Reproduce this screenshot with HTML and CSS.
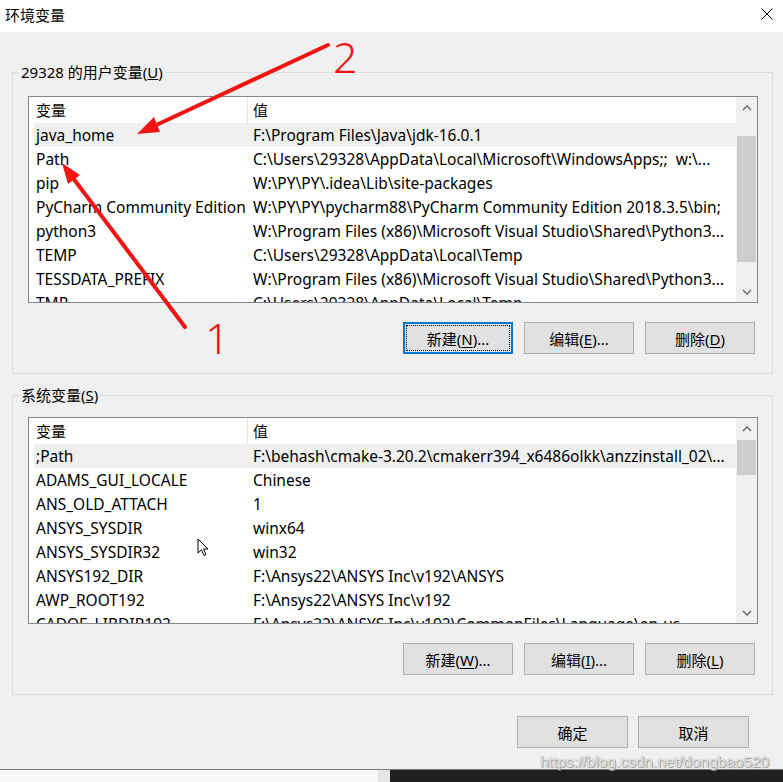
FILE: index.html
```html
<!DOCTYPE html>
<html lang="zh-CN">
<head>
    <meta charset="UTF-8">
    <title>环境变量</title>
    <link rel="stylesheet" href="styles.css">
</head>
<body>
    <div class="window">
        <div class="titlebar">
            <span class="title">环境变量</span>
            <svg class="close-icon" width="12" height="12" viewBox="0 0 12 12">
                <path d="M0.5 0.5 L11.5 11.5 M11.5 0.5 L0.5 11.5" stroke="#000" stroke-width="1" fill="none"/>
            </svg>
        </div>

        <div class="dialog-body">
            <!-- 用户变量 -->
            <div class="group">
                <div class="group-label">29328 的用户变量(<u>U</u>)</div>
                <div class="list">
                    <div class="list-view">
                        <div class="list-header">
                            <div class="col-name">变量</div>
                            <div class="col-value">值</div>
                        </div>
                        <div class="row selected"><div class="col-name">java_home</div><div class="col-value">F:\Program Files\Java\jdk-16.0.1</div></div>
                        <div class="row"><div class="col-name">Path</div><div class="col-value">C:\Users\29328\AppData\Local\Microsoft\WindowsApps;;&nbsp; w:\...</div></div>
                        <div class="row"><div class="col-name">pip</div><div class="col-value">W:\PY\PY\.idea\Lib\site-packages</div></div>
                        <div class="row"><div class="col-name">PyCharm Community Edition</div><div class="col-value">W:\PY\PY\pycharm88\PyCharm Community Edition 2018.3.5\bin;</div></div>
                        <div class="row"><div class="col-name">python3</div><div class="col-value">W:\Program Files (x86)\Microsoft Visual Studio\Shared\Python3...</div></div>
                        <div class="row"><div class="col-name">TEMP</div><div class="col-value">C:\Users\29328\AppData\Local\Temp</div></div>
                        <div class="row"><div class="col-name">TESSDATA_PREFIX</div><div class="col-value">W:\Program Files (x86)\Microsoft Visual Studio\Shared\Python3...</div></div>
                        <div class="row"><div class="col-name">TMP</div><div class="col-value">C:\Users\29328\AppData\Local\Temp</div></div>
                    </div>
                    <div class="scrollbar">
                        <div class="scroll-btn">
                            <svg width="10" height="6" viewBox="0 0 10 6"><path d="M1 5 L5 1 L9 5" stroke="#606060" stroke-width="1.3" fill="none"/></svg>
                        </div>
                        <div class="scroll-track">
                            <div class="thumb thumb-user"></div>
                        </div>
                        <div class="scroll-btn">
                            <svg width="10" height="6" viewBox="0 0 10 6"><path d="M1 1 L5 5 L9 1" stroke="#606060" stroke-width="1.3" fill="none"/></svg>
                        </div>
                    </div>
                </div>
                <div class="button-row">
                    <button class="btn focused">新建(<u>N</u>)...</button>
                    <button class="btn">编辑(<u>E</u>)...</button>
                    <button class="btn">删除(<u>D</u>)</button>
                </div>
            </div>

            <!-- 系统变量 -->
            <div class="group group-system">
                <div class="group-label">系统变量(<u>S</u>)</div>
                <div class="list">
                    <div class="list-view">
                        <div class="list-header">
                            <div class="col-name">变量</div>
                            <div class="col-value">值</div>
                        </div>
                        <div class="row selected"><div class="col-name">;Path</div><div class="col-value">F:\behash\cmake-3.20.2\cmakerr394_x6486olkk\anzzinstall_02\...</div></div>
                        <div class="row"><div class="col-name">ADAMS_GUI_LOCALE</div><div class="col-value">Chinese</div></div>
                        <div class="row"><div class="col-name">ANS_OLD_ATTACH</div><div class="col-value">1</div></div>
                        <div class="row"><div class="col-name">ANSYS_SYSDIR</div><div class="col-value">winx64</div></div>
                        <div class="row"><div class="col-name">ANSYS_SYSDIR32</div><div class="col-value">win32</div></div>
                        <div class="row"><div class="col-name">ANSYS192_DIR</div><div class="col-value">F:\Ansys22\ANSYS Inc\v192\ANSYS</div></div>
                        <div class="row"><div class="col-name">AWP_ROOT192</div><div class="col-value">F:\Ansys22\ANSYS Inc\v192</div></div>
                        <div class="row"><div class="col-name">CADOE_LIBDIR192</div><div class="col-value">F:\Ansys22\ANSYS Inc\v192\CommonFiles\Language\en-us</div></div>
                    </div>
                    <div class="scrollbar">
                        <div class="scroll-btn">
                            <svg width="10" height="6" viewBox="0 0 10 6"><path d="M1 5 L5 1 L9 5" stroke="#606060" stroke-width="1.3" fill="none"/></svg>
                        </div>
                        <div class="scroll-track">
                            <div class="thumb thumb-system"></div>
                        </div>
                        <div class="scroll-btn">
                            <svg width="10" height="6" viewBox="0 0 10 6"><path d="M1 1 L5 5 L9 1" stroke="#606060" stroke-width="1.3" fill="none"/></svg>
                        </div>
                    </div>
                </div>
                <div class="button-row">
                    <button class="btn">新建(<u>W</u>)...</button>
                    <button class="btn">编辑(<u>I</u>)...</button>
                    <button class="btn">删除(<u>L</u>)</button>
                </div>
            </div>

            <div class="dialog-buttons">
                <button class="btn btn-wide">确定</button>
                <button class="btn btn-wide">取消</button>
            </div>
        </div>

        <div class="desktop">
            <div class="desktop-light"></div>
            <div class="desktop-edge"></div>
            <div class="desktop-dark"></div>
        </div>
    </div>

    <!-- 红色标注箭头 -->
    <svg class="annotations" width="783" height="782" viewBox="0 0 783 782">
        <g stroke="#f01414" stroke-width="4" stroke-linecap="round" fill="#f01414">
            <line x1="328" y1="45" x2="152" y2="127"/>
            <line x1="185" y1="327" x2="70" y2="174"/>
        </g>
        <g fill="#f01414">
            <polygon points="137,134 160,132 154,117"/>
            <polygon points="62,163 80,175 68,184"/>
        </g>
        <text class="mark" x="333" y="73">2</text>
        <text class="mark" x="205" y="354">1</text>
    </svg>

    <svg class="cursor" width="14" height="20" viewBox="0 0 14 20">
        <path d="M1 1 L1 15 L4.5 11.8 L7 17.5 L9 16.6 L6.6 11 L11 11 Z" fill="#fff" stroke="#000" stroke-width="1"/>
    </svg>

    <div class="watermark">https://blog.csdn.net/dongbao520</div>
</body>
</html>
```

FILE: styles.css
```css
:root {
    --dialog-bg: #f0f0f0;
    --group-border: #dcdcdc;
    --list-border: #828790;
    --button-bg: #e1e1e1;
    --button-border: #adadad;
    --focus-blue: #0078d7;
}

* {
    margin: 0;
    padding: 0;
    box-sizing: border-box;
}

body {
    width: 783px;
    height: 782px;
    overflow: hidden;
    position: relative;
    font-family: "Noto Sans", "Noto Sans CJK SC", sans-serif;
    font-size: 15px;
    color: #000;
    background: #fff;
}

.window {
    display: flex;
    flex-direction: column;
    height: 782px;
}

.titlebar {
    height: 32px;
    background: #fff;
    display: flex;
    align-items: center;
    justify-content: space-between;
    padding: 0 10px 4px 5px;
}

.title {
    font-size: 15px;
}

.dialog-body {
    background: var(--dialog-bg);
    height: 738px;
    padding: 40px 10px 0 12px;
    border-bottom: 1px solid #7a7a7a;
}

.group {
    border: 1px solid var(--group-border);
    padding: 0 14px 19px 15px;
}

.group-system {
    margin-top: 21px;
}

.group-label {
    width: fit-content;
    margin: -11px 0 14px -9px;
    padding: 0 2px;
    line-height: 20px;
    background: var(--dialog-bg);
}

.group-system .group-label {
    margin-bottom: 12px;
}

.list {
    height: 207px;
    border: 1px solid var(--list-border);
    background: #fff;
    display: flex;
}

.list-view {
    flex: 1;
    overflow: hidden;
    padding-left: 5px;
}

.list-header,
.row {
    display: grid;
    grid-template-columns: 213px 1fr;
    white-space: nowrap;
}

.list-header {
    height: 26px;
    line-height: 26px;
}

.list-header .col-value {
    border-left: 1px solid #e5e5e5;
    padding-left: 5px;
}

.row {
    height: 24px;
    line-height: 24px;
    font-size: 15.5px;
}

.row.selected {
    background: #f0f0f0;
}

.col-name {
    padding-left: 2px;
    overflow: hidden;
}

.col-value {
    padding-left: 6px;
    overflow: hidden;
}

.scrollbar {
    width: 21px;
    background: var(--dialog-bg);
    display: flex;
    flex-direction: column;
}

.scroll-btn {
    height: 21px;
    display: flex;
    align-items: center;
    justify-content: center;
}

.scroll-track {
    flex: 1;
    padding: 0 1px;
}

.thumb {
    background: #cdcdcd;
}

.thumb-user {
    margin-top: 18px;
    height: 126px;
}

.thumb-system {
    margin-top: 1px;
    height: 35px;
}

.button-row {
    display: flex;
    justify-content: flex-end;
    gap: 11px;
    margin-top: 19px;
    padding-right: 3px;
}

.btn {
    width: 110px;
    height: 32px;
    background: var(--button-bg);
    border: 1px solid var(--button-border);
    font-family: inherit;
    font-size: 15px;
    color: #000;
}

.btn u {
    text-decoration-thickness: 1px;
    text-underline-offset: 2px;
}

.btn.focused {
    border-color: var(--focus-blue);
    box-shadow: inset 0 0 0 1px var(--focus-blue);
    outline: 1px dotted #000;
    outline-offset: -4px;
}

.dialog-buttons {
    display: flex;
    justify-content: flex-end;
    gap: 10px;
    margin-top: 21px;
    padding-right: 24px;
}

.btn-wide {
    width: 111px;
}

.desktop {
    flex: 1;
    display: flex;
}

.desktop-light {
    width: 378px;
    background: #f8f8f8;
}

.desktop-edge {
    width: 12px;
    background: #e6e6e6;
}

.desktop-dark {
    flex: 1;
    background: #1f1f1f;
}

/* 标注层 */
.annotations {
    position: absolute;
    left: 0;
    top: 0;
    pointer-events: none;
}

.mark {
    font-family: "Noto Sans", sans-serif;
    font-size: 43px;
    font-weight: 300;
    fill: #f01414;
}

.cursor {
    position: absolute;
    left: 197px;
    top: 538px;
}

.watermark {
    position: absolute;
    left: 540px;
    top: 753px;
    font-family: "Liberation Sans", Arial, sans-serif;
    font-size: 15.5px;
    color: rgba(255, 255, 255, 0.75);
    text-shadow: 0 0 1px #888, 1px 1px 1px #999;
    white-space: nowrap;
}
```
